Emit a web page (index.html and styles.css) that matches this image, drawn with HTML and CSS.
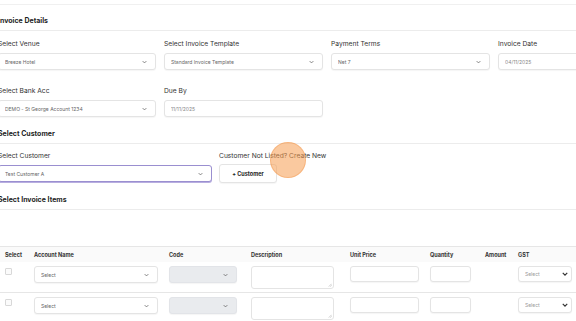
FILE: index.html
```html
<!DOCTYPE html>
<html>
<head>
<meta charset="utf-8">
<link rel="stylesheet" href="styles.css">
</head>
<body>
<div class="page">
  <section class="section first">
    <h2 class="sec-title">Invoice Details</h2>
    <div class="sec-body">
      <div class="grid4">
        <div class="field">
          <label class="label">Select Venue</label>
          <div class="control select"><span>Breeze Hotel</span><svg class="chev" viewBox="0 0 8 5"><path d="M1 1l3 3 3-3"/></svg></div>
        </div>
        <div class="field">
          <label class="label">Select Invoice Template</label>
          <div class="control select"><span>Standard Invoice Template</span><svg class="chev" viewBox="0 0 8 5"><path d="M1 1l3 3 3-3"/></svg></div>
        </div>
        <div class="field">
          <label class="label">Payment Terms</label>
          <div class="control select"><span>Net 7</span><svg class="chev" viewBox="0 0 8 5"><path d="M1 1l3 3 3-3"/></svg></div>
        </div>
        <div class="field">
          <label class="label">Invoice Date</label>
          <div class="control date"><span>04/11/2025</span></div>
        </div>
        <div class="field row2">
          <label class="label">Select Bank Acc</label>
          <div class="control select"><span>DEMO - St George Account 1234</span><svg class="chev" viewBox="0 0 8 5"><path d="M1 1l3 3 3-3"/></svg></div>
        </div>
        <div class="field row2">
          <label class="label">Due By</label>
          <div class="control date"><span>11/11/2025</span></div>
        </div>
      </div>
    </div>
  </section>

  <section class="section">
    <h2 class="sec-title">Select Customer</h2>
    <div class="sec-body cust-body">
      <div class="field cust-field">
        <label class="label">Select Customer</label>
        <div class="control select focused"><span>Test Customer A</span><svg class="chev" viewBox="0 0 8 5"><path d="M1 1l3 3 3-3"/></svg></div>
      </div>
      <div class="field new-field">
        <label class="label">Customer Not Listed? Create New</label>
        <button class="btn">+ Customer</button>
      </div>
      <div class="click-dot"></div>
    </div>
  </section>

  <section class="section">
    <h2 class="sec-title">Select Invoice Items</h2>
  </section>

  <div class="items">
    <div class="trow thead">
      <div>Select</div>
      <div>Account Name</div>
      <div>Code</div>
      <div>Description</div>
      <div>Unit Price</div>
      <div>Quantity</div>
      <div>Amount</div>
      <div>GST</div>
    </div>
    <div class="trow tbody">
      <div><span class="check"></span></div>
      <div><div class="control select acct"><span>Select</span><svg class="chev" viewBox="0 0 8 5"><path d="M1 1l3 3 3-3"/></svg></div></div>
      <div><div class="control select code"><span></span><svg class="chev" viewBox="0 0 8 5"><path d="M1 1l3 3 3-3"/></svg></div></div>
      <div><div class="textarea"><svg class="grip" viewBox="0 0 5 5"><path d="M4.5 1L1 4.5M4.5 3L3 4.5"/></svg></div></div>
      <div><div class="control input price"></div></div>
      <div><div class="control input qty"></div></div>
      <div></div>
      <div><div class="control select gst"><span>Select</span><svg class="chev bold" viewBox="0 0 8 5"><path d="M1 1l3 3 3-3"/></svg></div></div>
    </div>
    <div class="trow tbody">
      <div><span class="check"></span></div>
      <div><div class="control select acct"><span>Select</span><svg class="chev" viewBox="0 0 8 5"><path d="M1 1l3 3 3-3"/></svg></div></div>
      <div><div class="control select code"><span></span><svg class="chev" viewBox="0 0 8 5"><path d="M1 1l3 3 3-3"/></svg></div></div>
      <div><div class="textarea"><svg class="grip" viewBox="0 0 5 5"><path d="M4.5 1L1 4.5M4.5 3L3 4.5"/></svg></div></div>
      <div><div class="control input price"></div></div>
      <div><div class="control input qty"></div></div>
      <div></div>
      <div><div class="control select gst"><span>Select</span><svg class="chev bold" viewBox="0 0 8 5"><path d="M1 1l3 3 3-3"/></svg></div></div>
    </div>
  </div>
</div>
</body>
</html>
```

FILE: styles.css
```css
* { box-sizing: border-box; }
html, body { margin: 0; padding: 0; background: #fff; overflow: hidden; }
body {
  width: 576px;
  height: 321px;
  font-family: Inter, "Open Sans", sans-serif;
  color: #2b2b2b;
}
.page {
  padding-top: 4px;
  margin-left: -2px;
}
.section {
  border-top: 1px solid #f0f0f0;
}
.section + .section { border-top: none; }
.sec-title {
  margin: 0;
  font-size: 7px;
  font-weight: 700;
  line-height: 10px;
  padding: 11px 0 4px 0;
  border-bottom: 1px solid #ececec;
  color: #1f1f1f;
}
.section:not(.first) .sec-title { padding-top: 10px; }
.sec-body { padding: 9px 0 2px 0; }
.grid4 {
  display: grid;
  grid-template-columns: 158px 159px 159px 159px;
  column-gap: 8px;
  row-gap: 17px;
}
.field { display: flex; flex-direction: column; }
.label {
  font-size: 6.7px;
  line-height: 9px;
  color: #333;
  margin-bottom: 4px;
  white-space: nowrap;
}
.control {
  height: 17px;
  border: 1px solid #e4e4e4;
  border-radius: 3px;
  background: #fff;
  box-shadow: 0 1px 1px rgba(0,0,0,0.04);
  display: flex;
  align-items: center;
  padding: 0 6px;
  font-size: 5px;
  color: #666;
}
.control span { flex: 1; white-space: nowrap; overflow: hidden; }
.select .chev {
  width: 5px;
  height: 4px;
  fill: none;
  stroke: #555;
  stroke-width: 1.1;
  flex: none;
  margin-right: 2px;
}
.chev.bold { stroke: #333; stroke-width: 1.6; width: 6px; margin-right: 0; }
.date { color: #888; }
.cust-body {
  position: relative;
  display: flex;
  column-gap: 7px;
  padding-top: 8px;
  padding-bottom: 2px;
}
.cust-field { width: 214px; }
.focused {
  border: 1px solid #9a8fd0;
  box-shadow: 0 1px 0 #b8aee0;
}
.new-field .label { margin-bottom: 3px; }
.btn {
  width: 58px;
  height: 19px;
  border: 1px solid #e4e4e4;
  border-radius: 3px;
  background: #fff;
  font-family: inherit;
  font-size: 5.5px;
  font-weight: 700;
  color: #222;
  padding: 0;
  box-shadow: 0 1px 1px rgba(0,0,0,0.04);
}
.click-dot {
  position: absolute;
  left: 272px;
  top: -2px;
  width: 36px;
  height: 36px;
  border-radius: 50%;
  background: rgba(246, 156, 80, 0.55);
  border: 1px solid rgba(240, 140, 60, 0.35);
}
.items {
  margin-top: 36px;
  border-top: 1px solid #e6e6e6;
}
.trow {
  display: grid;
  grid-template-columns: 29px 135px 82px 99px 80px 55px 33px 58px;
  padding-left: 7px;
}
.thead {
  height: 15px;
  align-items: center;
  font-size: 5.5px;
  font-weight: 700;
  color: #333;
  background: #fafafa;
}
.tbody {
  height: 31px;
  border-bottom: 1px solid #e6e6e6;
  padding-top: 4px;
  background: #fff;
}
.check {
  display: block;
  width: 7px;
  height: 7px;
  border: 1px solid #d8d8d8;
  border-radius: 1px;
  margin-top: 2px;
  background: #fbfbfb;
}
.acct { width: 124px; }
.code { width: 68px; background: #e9ebee; border-color: #e2e4e8; }
.price { width: 69px; height: 16px; }
.qty { width: 41px; height: 16px; }
.gst { width: 54px; height: 16px; padding: 0 3px 0 6px; color: #999; }
.textarea {
  width: 83px;
  height: 23px;
  border: 1px solid #e4e4e4;
  border-radius: 3px;
  background: #fff;
  position: relative;
}
.grip {
  position: absolute;
  right: 1px;
  bottom: 1px;
  width: 4px;
  height: 4px;
  stroke: #999;
  stroke-width: 0.6;
  fill: none;
}
```
